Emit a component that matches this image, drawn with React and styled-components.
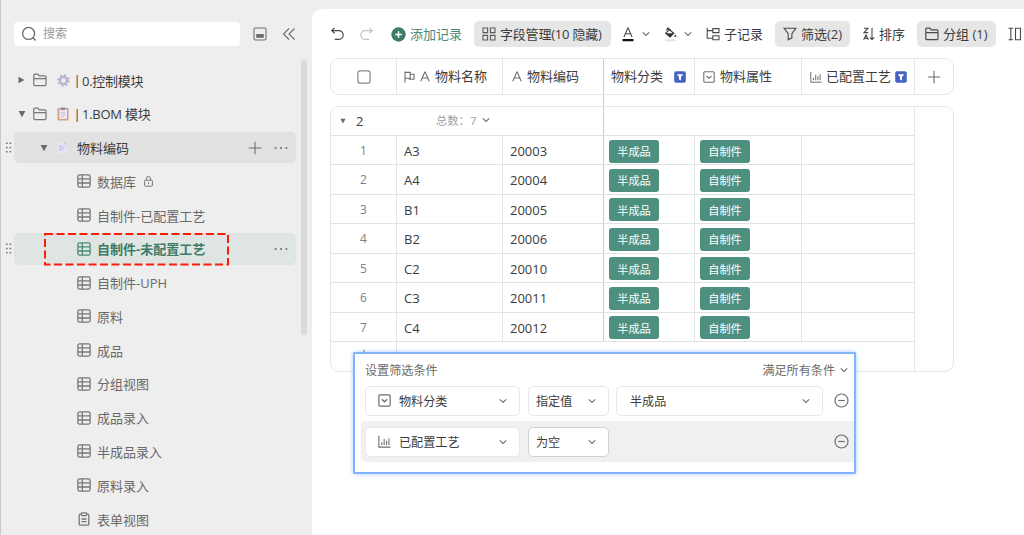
import React from "react";
import styled, { createGlobalStyle, css } from "styled-components";

const GlobalStyle = createGlobalStyle`
  * {
    box-sizing: border-box;
  }

  body {
    margin: 0;
    background: #eeeeee;
    font-family: "Open Sans", "Noto Sans CJK SC", sans-serif;
    font-size: 13px;
    color: #3c3c3c;
  }
`;

// lifts the text of a bar by a pixel, the icons stay centered
const raisedText = css`
  padding-bottom: 2px;

  > svg {
    margin-top: 2px;
  }
`;

const Page = styled.div`
  display: flex;
  width: 1024px;
  height: 535px;
  overflow: hidden;
  background: #eeeeee;
  border-left: 1px solid #c3cbcf;
`;

/* ---------- sidebar ---------- */

const Sidebar = styled.aside`
  position: relative;
  flex: none;
  width: 311px;
  padding-top: 22px;
`;

const SearchBar = styled.div`
  display: flex;
  align-items: center;
  height: 23px;
  padding-left: 13px;
`;

const SearchInput = styled.div`
  display: flex;
  align-items: center;
  gap: 6px;
  width: 226px;
  height: 24px;
  padding-left: 7px;
  margin-right: 13px;
  border-radius: 4px;
  background: #ffffff;
  color: #9a9a9a;
  font-size: 12px;
  ${raisedText}
`;

const SearchAction = styled.span`
  display: flex;
  width: 29px;
`;

const Tree = styled.div`
  display: flex;
  flex-direction: column;
  gap: 2px;
  padding-top: 19.2px;
`;

const TreeLine = styled.div`
  display: flex;
  align-items: center;
  height: 31.77px;
`;

const Grip = styled.span`
  flex: none;
  display: flex;
  width: 13px;
  padding-left: 3.5px;
`;

const TreeRow = styled.div`
  display: flex;
  align-items: center;
  width: 281.5px;
  height: 100%;
  padding-left: ${({ $indent }) => $indent}px;
  padding-right: 8px;
  border-radius: 5px;
  color: ${({ $top }) => ($top ? "#3c3c3c" : "#696969")};
  ${({ $hover }) => $hover && css`background: #e1e1e1;`}
  ${({ $active }) =>
    $active &&
    css`
      background: #dfe5e2;
      color: #3d7a68;
      font-weight: 700;
    `}
`;

const Label = styled.span`
  flex: 1;
  display: flex;
  align-items: center;
  gap: 8px;
  letter-spacing: ${({ $tight }) => ($tight ? "-0.25px" : "normal")};
  white-space: nowrap;
`;

const Bar = styled.span`
  width: 5px;
  text-indent: -2.5px;
  margin-right: -7px;
`;

const Slot = styled.span`
  flex: none;
  display: flex;
  align-items: center;
  width: ${({ $w }) => $w}px;
`;

const Scrollbar = styled.div`
  position: absolute;
  left: 300px;
  top: 60px;
  width: 6px;
  height: 275px;
  border-radius: 3px;
  background: #dadada;
`;

const DashedMark = styled.svg`
  position: absolute;
  left: 41.5px;
  top: 232px;
`;

/* ---------- main panel ---------- */

const Main = styled.main`
  position: relative;
  flex: none;
  width: 712px;
  padding: 12px 0 0 18px;
  margin-top: 9px;
  border-top-left-radius: 10px;
  background: #ffffff;
  overflow: hidden;
`;

const Toolbar = styled.div`
  display: flex;
  align-items: center;
  height: 26px;
  width: 760px;
`;

const Tool = styled.div`
  flex: none;
  display: flex;
  align-items: center;
  gap: ${({ $gap }) => $gap ?? 4}px;
  width: ${({ $w }) => $w}px;
  height: 26px;
  margin-right: ${({ $mr }) => $mr ?? 0}px;
  padding-left: ${({ $filled }) => ($filled ? 8 : 0)}px;
  border-radius: 5px;
  background: ${({ $filled }) => ($filled ? "#e6e6e6" : "transparent")};
  color: ${({ $green }) => ($green ? "#4a8a78" : "#3c3c3c")};
  letter-spacing: ${({ $tight }) => ($tight ? "-0.2px" : "normal")};
  white-space: nowrap;
  ${raisedText}
`;

const HeaderRow = styled.div`
  display: grid;
  grid-template-columns: 66px 106px 101px 91px 107px 113px 1fr;
  width: 624px;
  height: 37px;
  margin-top: 11px;
  border: 1px solid #e6e6e6;
  border-radius: 9px;
`;

const HeaderCell = styled.div`
  display: flex;
  align-items: center;
  justify-content: ${({ $center }) => ($center ? "center" : "flex-start")};
  gap: ${({ $gap }) => $gap ?? 5}px;
  padding-left: ${({ $pl }) => $pl ?? 0}px;
  border-right: ${({ $last, $frozen }) => ($last ? "none" : `1px solid ${$frozen ? "#cccccc" : "#e6e6e6"}`)};
  white-space: nowrap;
  ${raisedText}
`;

const HeaderGap = styled.div`
  width: 274px;
  height: 11px;
  border-right: 1px solid #cccccc;
`;

const TableBody = styled.div`
  display: flex;
  width: 624px;
  height: 266px;
  border: 1px solid #e6e6e6;
  border-radius: 9px;
`;

const Rows = styled.div`
  width: 584px;
  border-right: 1px solid #e6e6e6;
`;

const GroupRow = styled.div`
  display: flex;
  align-items: center;
  height: 28.8px;
  border-bottom: 1px solid #e2e2e2;
`;

const GroupHead = styled.div`
  display: flex;
  align-items: center;
  width: 273px;
  height: 100%;
  padding-left: 9px;
  border-right: 1px solid #cccccc;
`;

const GroupValue = styled.span`
  width: 90px;
  padding: 1px 0 0 10px;
`;

const GroupTotal = styled.span`
  display: flex;
  align-items: center;
  gap: 6px;
  padding-bottom: 2px;
  color: #a0a0a0;
  font-size: 11.3px;
`;

const Row = styled.div`
  display: grid;
  grid-template-columns: 66px 106px 101px 91px 107px 1fr;
  height: 29.46px;
  border-bottom: 1px solid #e2e2e2;
`;

const Cell = styled.div`
  display: flex;
  align-items: center;
  padding: 2px 0 0 ${({ $tag }) => ($tag ? 5 : 7)}px;
  border-right: 1px solid ${({ $frozen }) => ($frozen ? "#cccccc" : "#e6e6e6")};
  font-size: 13px;

  &:last-child {
    border-right: none;
  }
`;

const IndexCell = styled(Cell)`
  justify-content: center;
  padding: 1px 0 0;
  color: #808080;
  font-size: 12px;
`;

const Tag = styled.span`
  display: flex;
  align-items: center;
  justify-content: center;
  width: 50px;
  height: 23px;
  border-radius: 3px;
  background: #4e9080;
  color: #ffffff;
  font-size: 11.2px;
`;

const AddRow = styled.div`
  display: flex;
  justify-content: center;
  width: 66px;
  height: 29px;
  padding-top: 7px;
  border-right: 1px solid #e6e6e6;
`;

/* ---------- filter popup ---------- */

const Popup = styled.div`
  position: absolute;
  left: 42px;
  top: 344px;
  width: 501px;
  height: 120px;
  padding: 6px 0 0 6px;
  border: 1px solid #7cafff;
  background: #ffffff;
  box-shadow: 0 0 0 1px rgba(110, 166, 255, 0.7), 0 0 5px rgba(70, 140, 255, 0.7);
  font-size: 12.1px;
  overflow: hidden;
`;

const PopupHead = styled.div`
  display: flex;
  align-items: center;
  justify-content: space-between;
  height: 20px;
  padding: 0 6px 1px 4px;
  color: #6b6b6b;
`;

const MatchMode = styled.span`
  display: flex;
  align-items: center;
  gap: 5px;
`;

const Condition = styled.div`
  display: flex;
  align-items: center;
  height: 41px;
  padding-left: 4px;
  border-radius: 5px 0 0 5px;
  background: ${({ $hover }) => ($hover ? "#f0f0f0" : "transparent")};
`;

const Select = styled.div`
  flex: none;
  display: flex;
  align-items: center;
  width: ${({ $w }) => $w}px;
  height: 30px;
  margin-right: ${({ $mr }) => $mr ?? 7}px;
  padding-right: 12px;
  padding-left: ${({ $pl }) => $pl ?? 7}px;
  border: 1px solid ${({ $strong }) => ($strong ? "#d2d2d2" : "#e8e8e8")};
  border-radius: 5px;
  background: #ffffff;
`;

const SelectText = styled.span`
  flex: 1;
  padding-left: ${({ $pl }) => $pl ?? 0}px;
`;

const RemoveSlot = styled.span`
  display: flex;
  margin-left: auto;
  padding-right: 5px;
`;

const AddCondition = styled.div`
  padding: 8px 0 0 9px;
  line-height: 18px;
  white-space: nowrap;
`;

/* ---------- icons ---------- */

const Icon = ({ w = 14, h, box = "0 0 14 14", color = "#6e6e6e", sw = 1.1, children }) => (
  <svg width={w} height={h ?? w} viewBox={box} fill="none" stroke={color} strokeWidth={sw}>
    {children}
  </svg>
);

const SearchIcon = () => (
  <Icon w={16} box="0 0 16 16" sw={1.4}>
    <circle cx="7.6" cy="7.4" r="6" />
    <path d="M11.8 11.6l2.8 3" />
  </Icon>
);

const DockIcon = () => (
  <Icon>
    <rect x="1" y="1" width="12" height="12" rx="1.6" />
    <rect x="3.2" y="7" width="7.6" height="3.8" fill="#6e6e6e" stroke="none" />
  </Icon>
);

const CollapseIcon = () => (
  <Icon w={14}>
    <path d="M7 1.5L1.5 7L7 12.5M12.5 1.5L7 7l5.5 5.5" />
  </Icon>
);

const FolderIcon = ({ color = "#777777" }) => (
  <Icon w={14} color={color} sw={1.2}>
    <path d="M.8 11.6V2.2q0-1 1-1h3l1.4 1.6h5.8q1 0 1 1v7.8q0 1-1 1H1.8q-1 0-1-1zM.8 5.6H13" />
  </Icon>
);

const GearIcon = () => (
  <Icon w={13} color="#b9b1cc" sw={2.4}>
    <circle cx="7" cy="7" r="3.8" />
    <circle cx="7" cy="7" r="5.8" strokeWidth="1.8" strokeDasharray="2.2 2.35" />
  </Icon>
);

const ClipboardColorIcon = () => (
  <Icon w={12} h={14} box="0 0 12 14">
    <rect x=".5" y="1" width="11" height="12.6" rx=".8" fill="#d6a080" stroke="none" />
    <path d="M2.2 2.4h7.8v9.6H2.2z" fill="#ebe5f3" stroke="none" />
    <rect x="3.7" y=".4" width="4.6" height="2.6" rx=".8" fill="#8f879c" stroke="none" />
    <path d="M3.6 5.6h5M3.6 7.6h5M3.6 9.6h3.4" stroke="#c3b9d3" strokeWidth=".7" />
  </Icon>
);

const PageColorIcon = () => (
  <Icon w={10} h={13} box="0 0 10 13">
    <path d="M.3.5H7L9.7 3.4v9.1H.3z" fill="#eae4f7" stroke="none" />
    <path d="M2 5.2h4.4M2 7.2h5.4M2 9.2h3.4" stroke="#b5aacb" strokeWidth=".8" />
    <path d="M7 .5L9.7 3.4H7z" fill="#cdc4e2" stroke="none" />
  </Icon>
);

const GridIcon = ({ color = "#777777" }) => (
  <Icon w={14} color={color} sw={1.3}>
    <rect x=".9" y=".9" width="12.2" height="12.2" rx="1.5" />
    <path d="M5.3 1v12M1 4.9h12M1 9h12" />
  </Icon>
);

const FormIcon = () => (
  <Icon w={14} color="#777777" sw={1.3}>
    <path d="M4.4 2.2H3.2q-1 0-1 1v9q0 1 1 1h7.6q1 0 1-1v-9q0-1-1-1H9.6" />
    <rect x="4.4" y=".8" width="5.2" height="2.8" rx=".8" />
    <path d="M4.5 7h5M4.5 9.7h5" />
  </Icon>
);

const LockIcon = () => (
  <Icon w={9} h={11} box="0 0 9 11" color="#777777" sw={1}>
    <rect x=".6" y="4.2" width="7.8" height="6" rx="1" />
    <path d="M2.4 4V2.6a2.1 2.1 0 0 1 4.2 0V4M4.5 6.4v1.8" />
  </Icon>
);

const GripIcon = () => (
  <Icon w={7} h={11} box="0 0 7 11">
    <path d="M1 1.2h1.6M4.6 1.2h1.6M1 5.5h1.6M4.6 5.5h1.6M1 9.8h1.6M4.6 9.8h1.6" stroke="#747474" strokeWidth="1.5" />
  </Icon>
);

const CaretRight = () => (
  <Icon w={7} h={8} box="0 0 7 8">
    <path d="M.5.8L6.5 4 .5 7.2z" fill="#6a6a6a" stroke="none" />
  </Icon>
);

const CaretDown = ({ w = 8 }) => (
  <Icon w={w} h={w} box="0 0 8 8">
    <path d="M.6 1h6.8L4 7.2z" fill="#6a6a6a" stroke="none" />
  </Icon>
);

const PlusIcon = ({ w = 14 }) => (
  <Icon w={w} sw={1.1}>
    <path d="M7 .8v12.4M.8 7h12.4" />
  </Icon>
);

const MoreIcon = () => (
  <Icon w={14} h={4} box="0 0 14 4">
    <g fill="#6e6e6e" stroke="none">
      <circle cx="1.6" cy="2" r="1" />
      <circle cx="7" cy="2" r="1" />
      <circle cx="12.4" cy="2" r="1" />
    </g>
  </Icon>
);

const UndoIcon = ({ color, flip }) => (
  <Icon w={14} color={color} sw={1.2}>
    <path
      transform={flip ? "translate(14 0) scale(-1 1)" : undefined}
      d="M4.6.9L1.8 3.6l2.8 2.7M1.8 3.6h7a4.3 4.3 0 0 1 0 8.8H4.8"
    />
  </Icon>
);

const AddCircleIcon = () => (
  <Icon w={15} box="0 0 15 15">
    <circle cx="7.5" cy="7.5" r="7.2" fill="#3f7b6b" stroke="none" />
    <path d="M7.5 4.2v6.6M4.2 7.5h6.6" stroke="#ffffff" strokeWidth="1.5" />
  </Icon>
);

const FieldsIcon = () => (
  <Icon w={14} color="#5a5a5a">
    <path d="M1 1h4.6v4.6H1zM8.4 1H13v4.6H8.4zM1 8.4h4.6V13H1zM8.4 8.4H13V13H8.4z" />
  </Icon>
);

const TextColorIcon = () => (
  <Icon w={12} h={15} box="0 0 12 15">
    <path d="M2 10L5.8 1h.4L10 10M3.3 6.8h5.4" stroke="#4a4a4a" />
    <path d="M.5 13.2h11" stroke="#111111" strokeWidth="2.2" />
  </Icon>
);

const FillIcon = () => (
  <Icon w={13} h={15} box="0 0 13 15">
    <path d="M3 .8l6.8 5.4L6 10 1.6 6.2l5-4.4M2.2 3.4L5 .8" stroke="#333333" />
    <path d="M2.2 6.2h7.6L6 10z" fill="#333333" stroke="none" />
    <path d="M11.3 7.2l1.3 2.6h-2.6z" fill="#333333" stroke="none" />
    <path d="M1 13.2h10.6" stroke="#e2e2e2" strokeWidth="2" />
  </Icon>
);

const ChevronDown = ({ w = 8, color = "#6e6e6e" }) => (
  <Icon w={w} h={w} box="0 0 8 8" color={color} sw={1.1}>
    <path d="M.8 2.4L4 5.4l3.2-3" />
  </Icon>
);

const ChildIcon = () => (
  <Icon w={14} color="#4a4a4a">
    <path d="M1.2.8v10.4h5.4M1.2 3.6h5.4M6.8 1.6H13v4H6.8zM6.8 8.8H13v4H6.8z" />
  </Icon>
);

const FilterIcon = () => (
  <Icon w={14} color="#4a4a4a">
    <path d="M1 1.2h12L8.9 6.6v4.2l-3.7 2V6.6z" />
  </Icon>
);

const SortIcon = () => (
  <Icon w={12} h={14} box="0 0 12 14" color="#4a4a4a">
    <path d="M1 1.2h4L1 5.6h4.2M.6 12.8L3 8l2.4 4.8M1.5 11.4h3M9 .8v11.6M6.9 10.4L9 12.6l2.1-2.2" />
  </Icon>
);

const RowHeightIcon = () => (
  <Icon w={14} color="#4a4a4a">
    <path d="M.5 1.2h4.6M2.8 1.2v11.6M.5 12.8h4.6M7.5 1.2h5v11.6h-5z" />
  </Icon>
);

const CheckboxIcon = () => (
  <Icon w={14} color="#8a8a8a" sw={1.2}>
    <rect x=".9" y=".9" width="12.2" height="12.2" rx="2.2" />
  </Icon>
);

const FlagIcon = () => (
  <Icon w={11} h={12} box="0 0 11 12">
    <path d="M1 .6v10.8M1 1.4h5.2v5.8H1M6.2 3.2H10v5H5.4v-1" />
  </Icon>
);

const LetterIcon = () => (
  <Icon w={10} h={11} box="0 0 10 11">
    <path d="M.8 10.2L4.8 1h.4l4 9.2M2.2 7h5.6" />
  </Icon>
);

const FilterBadge = () => (
  <Icon w={12} box="0 0 12 12">
    <rect x=".2" y=".2" width="11.6" height="11.6" rx="1.8" fill="#4463c4" stroke="none" />
    <path d="M2.8 3.2h6.4L7 6v3.4L5 8.4V6z" fill="#ffffff" stroke="none" />
  </Icon>
);

const SelectIcon = ({ w = 12 }) => (
  <Icon w={w} box="0 0 12 12" sw={1.1}>
    <rect x=".8" y=".8" width="10.4" height="10.4" rx="1" />
    <path d="M3.5 4.8L6 7.2l2.5-2.4" />
  </Icon>
);

const ChartIcon = ({ w = 12 }) => (
  <Icon w={w} box="0 0 12 12" sw={1}>
    <path d="M.8.8v10.4h10.8M3.5 9.2V6.8M5.7 9.2V3.8M7.9 9.2V5.2M10.1 9.2v-6" />
  </Icon>
);

const MinusCircle = () => (
  <Icon w={15} box="0 0 15 15" sw={1.2}>
    <circle cx="7.5" cy="7.5" r="6.5" />
    <path d="M4.2 7.5h6.6" />
  </Icon>
);

/* ---------- data ---------- */

const views = [
  { name: "数据库", locked: true },
  { name: "自制件-已配置工艺" },
  { name: "自制件-未配置工艺", active: true },
  { name: "自制件-UPH" },
  { name: "原料" },
  { name: "成品" },
  { name: "分组视图" },
  { name: "成品录入" },
  { name: "半成品录入" },
  { name: "原料录入" },
  { name: "表单视图", form: true },
];

const records = [
  ["A3", "20003"],
  ["A4", "20004"],
  ["B1", "20005"],
  ["B2", "20006"],
  ["C2", "20010"],
  ["C3", "20011"],
  ["C4", "20012"],
];

const SidebarTree = () => (
  <Tree>
    <TreeLine>
      <Grip />
      <TreeRow $indent={4} $top>
        <Slot $w={15}><CaretRight /></Slot>
        <Slot $w={24}><FolderIcon /></Slot>
        <Slot $w={19}><GearIcon /></Slot>
        <Label $tight><Bar>|</Bar><span>0.控制模块</span></Label>
      </TreeRow>
    </TreeLine>
    <TreeLine>
      <Grip />
      <TreeRow $indent={4} $top>
        <Slot $w={15}><CaretDown /></Slot>
        <Slot $w={24}><FolderIcon /></Slot>
        <Slot $w={19}><ClipboardColorIcon /></Slot>
        <Label $tight><Bar>|</Bar><span>1.BOM 模块</span></Label>
      </TreeRow>
    </TreeLine>
    <TreeLine>
      <Grip><GripIcon /></Grip>
      <TreeRow $indent={26} $top $hover>
        <Slot $w={17}><CaretDown /></Slot>
        <Slot $w={20}><PageColorIcon /></Slot>
        <Label>物料编码</Label>
        <Slot $w={26}><PlusIcon /></Slot>
        <MoreIcon />
      </TreeRow>
    </TreeLine>
    {views.map((view) => (
      <TreeLine key={view.name}>
        <Grip>{view.active && <GripIcon />}</Grip>
        <TreeRow $indent={63} $active={view.active}>
          <Slot $w={20}>
            {view.form ? <FormIcon /> : <GridIcon color={view.active ? "#4a8a78" : undefined} />}
          </Slot>
          <Label>
            {view.name}
            {view.locked && <LockIcon />}
          </Label>
          {view.active && <MoreIcon />}
        </TreeRow>
      </TreeLine>
    ))}
  </Tree>
);

const FilterPopup = () => (
  <Popup>
    <PopupHead>
      <span>设置筛选条件</span>
      <MatchMode>满足所有条件<ChevronDown /></MatchMode>
    </PopupHead>
    <Condition>
      <Select $w={155} $pl={12} $mr={8}>
        <SelectIcon w={13} />
        <SelectText $pl={8}>物料分类</SelectText>
        <ChevronDown />
      </Select>
      <Select $w={81}>
        <SelectText>指定值</SelectText>
        <ChevronDown />
      </Select>
      <Select $w={207} $pl={13}>
        <SelectText>半成品</SelectText>
        <ChevronDown />
      </Select>
      <RemoveSlot><MinusCircle /></RemoveSlot>
    </Condition>
    <Condition $hover>
      <Select $w={155} $pl={12} $mr={8}>
        <ChartIcon w={13} />
        <SelectText $pl={8}>已配置工艺</SelectText>
        <ChevronDown />
      </Select>
      <Select $w={81} $strong>
        <SelectText>为空</SelectText>
        <ChevronDown />
      </Select>
      <RemoveSlot><MinusCircle /></RemoveSlot>
    </Condition>
    <AddCondition>添加条件</AddCondition>
  </Popup>
);

const App = () => {
  return (
    <Page>
      <GlobalStyle />
      <Sidebar>
        <SearchBar>
          <SearchInput><SearchIcon />搜索</SearchInput>
          <SearchAction><DockIcon /></SearchAction>
          <SearchAction><CollapseIcon /></SearchAction>
        </SearchBar>
        <SidebarTree />
        <Scrollbar />
        <DashedMark width="188" height="34" fill="none" stroke="#ff1a0a" strokeWidth="2" strokeDasharray="8 3.5">
          <rect x="2" y="2" width="183" height="30.5" />
        </DashedMark>
      </Sidebar>

      <Main>
        <Toolbar>
          <Tool $w={30}><UndoIcon color="#4a4a4a" /></Tool>
          <Tool $w={31}><UndoIcon color="#c4c4c4" flip /></Tool>
          <Tool $w={83} $green><AddCircleIcon />添加记录</Tool>
          <Tool $w={137} $mr={11} $filled $tight><FieldsIcon />字段管理(10 隐藏)</Tool>
          <Tool $w={42} $gap={8}><TextColorIcon /><ChevronDown /></Tool>
          <Tool $w={42} $gap={7}><FillIcon /><ChevronDown /></Tool>
          <Tool $w={69}><ChildIcon />子记录</Tool>
          <Tool $w={75} $mr={13} $filled><FilterIcon />筛选(2)</Tool>
          <Tool $w={54}><SortIcon />排序</Tool>
          <Tool $w={79} $mr={12} $filled><FolderIcon color="#4a4a4a" />分组 (1)</Tool>
          <Tool $w={20}><RowHeightIcon /></Tool>
        </Toolbar>

        <HeaderRow>
          <HeaderCell $center><CheckboxIcon /></HeaderCell>
          <HeaderCell $pl={7}><FlagIcon /><LetterIcon />物料名称</HeaderCell>
          <HeaderCell $pl={9} $frozen><LetterIcon />物料编码</HeaderCell>
          <HeaderCell $pl={7} $gap={11}>物料分类<FilterBadge /></HeaderCell>
          <HeaderCell $pl={8}><SelectIcon />物料属性</HeaderCell>
          <HeaderCell $pl={8} $gap={4}><ChartIcon />已配置工艺<FilterBadge /></HeaderCell>
          <HeaderCell $center $last><PlusIcon /></HeaderCell>
        </HeaderRow>
        <HeaderGap />
        <TableBody>
          <Rows>
            <GroupRow>
              <GroupHead>
                <CaretDown w={6} />
                <GroupValue>2</GroupValue>
                <GroupTotal>总数：7<ChevronDown /></GroupTotal>
              </GroupHead>
            </GroupRow>
            {records.map(([name, code], i) => (
              <Row key={code}>
                <IndexCell>{i + 1}</IndexCell>
                <Cell>{name}</Cell>
                <Cell $frozen>{code}</Cell>
                <Cell $tag><Tag>半成品</Tag></Cell>
                <Cell $tag><Tag>自制件</Tag></Cell>
                <Cell />
              </Row>
            ))}
            <AddRow><PlusIcon w={12} /></AddRow>
          </Rows>
        </TableBody>

        <FilterPopup />
      </Main>
    </Page>
  );
};

export default App;
